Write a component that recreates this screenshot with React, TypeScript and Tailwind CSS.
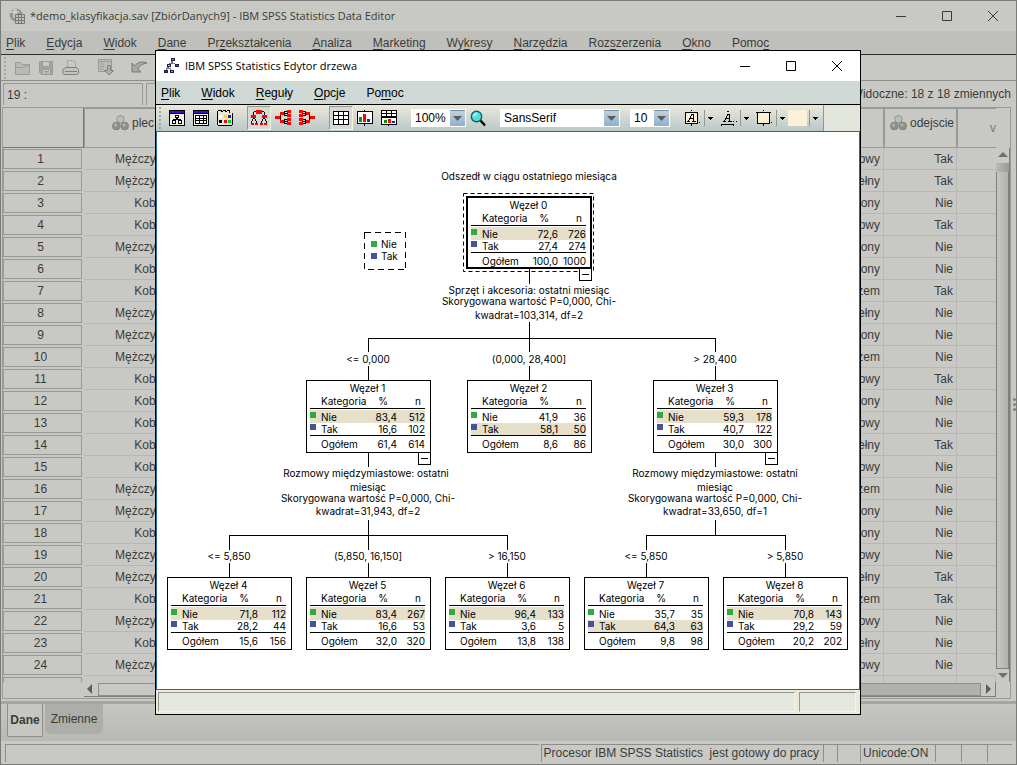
import type { ReactNode } from 'react';

const mainMenu: [string, number][] = [
  ['Plik', 0],
  ['Edycja', 0],
  ['Widok', 0],
  ['Dane', 0],
  ['Przekształcenia', 2],
  ['Analiza', 0],
  ['Marketing', 0],
  ['Wykresy', 2],
  ['Narzędzia', 0],
  ['Rozszerzenia', 3],
  ['Okno', 0],
  ['Pomoc', 4],
];

const treeMenu: [string, number][] = [
  ['Plik', 0],
  ['Widok', 0],
  ['Reguły', 0],
  ['Opcje', 0],
  ['Pomoc', 2],
];

const M = 'Mężczyzna';
const K = 'Kobieta';

const rows: [string, string, string][] = [
  [M, 'owy', 'Tak'],
  [M, 'ełny', 'Tak'],
  [K, 'ony', 'Nie'],
  [K, 'owy', 'Tak'],
  [M, 'ony', 'Nie'],
  [K, 'ony', 'Nie'],
  [K, 'zem', 'Tak'],
  [M, 'ełny', 'Nie'],
  [M, 'ony', 'Nie'],
  [M, 'zem', 'Nie'],
  [K, 'owy', 'Tak'],
  [K, 'ony', 'Nie'],
  [K, 'owy', 'Nie'],
  [K, 'ełny', 'Tak'],
  [K, 'owy', 'Nie'],
  [M, 'zem', 'Nie'],
  [M, 'ony', 'Nie'],
  [K, 'ony', 'Nie'],
  [M, 'owy', 'Nie'],
  [M, 'ełny', 'Tak'],
  [K, 'zem', 'Tak'],
  [M, 'owy', 'Nie'],
  [K, 'ełny', 'Nie'],
  [M, 'owy', 'Nie'],
];

type TreeNode = {
  id: number;
  x: number;
  y: number;
  nie: [string, string];
  tak: [string, string];
  total: [string, string];
  best: 'nie' | 'tak';
  open?: boolean;
};

const nodes: TreeNode[] = [
  { id: 0, x: 309, y: 64, nie: ['72,6', '726'], tak: ['27,4', '274'], total: ['100,0', '1000'], best: 'nie', open: true },
  { id: 1, x: 149, y: 248, nie: ['83,4', '512'], tak: ['16,6', '102'], total: ['61,4', '614'], best: 'nie', open: true },
  { id: 2, x: 310, y: 248, nie: ['41,9', '36'], tak: ['58,1', '50'], total: ['8,6', '86'], best: 'tak' },
  { id: 3, x: 496, y: 248, nie: ['59,3', '178'], tak: ['40,7', '122'], total: ['30,0', '300'], best: 'nie', open: true },
  { id: 4, x: 10, y: 445, nie: ['71,8', '112'], tak: ['28,2', '44'], total: ['15,6', '156'], best: 'nie' },
  { id: 5, x: 149, y: 445, nie: ['83,4', '267'], tak: ['16,6', '53'], total: ['32,0', '320'], best: 'nie' },
  { id: 6, x: 288, y: 445, nie: ['96,4', '133'], tak: ['3,6', '5'], total: ['13,8', '138'], best: 'nie' },
  { id: 7, x: 427, y: 445, nie: ['35,7', '35'], tak: ['64,3', '63'], total: ['9,8', '98'], best: 'tak' },
  { id: 8, x: 566, y: 445, nie: ['70,8', '143'], tak: ['29,2', '59'], total: ['20,2', '202'], best: 'nie' },
];

// centre of each text on the tree canvas
const captions = [
  { x: 372, y: 44, text: 'Odszedł w ciągu ostatniego miesiąca' },
  { x: 372, y: 158, text: 'Sprzęt i akcesoria: ostatni miesiąc' },
  { x: 372, y: 169, text: 'Skorygowana wartość P=0,000, Chi-' },
  { x: 372, y: 183, text: 'kwadrat=103,314, df=2' },
  { x: 211, y: 227, text: '<= 0,000' },
  { x: 372, y: 227, text: '(0,000, 28,400]' },
  { x: 558, y: 227, text: '> 28,400' },
  { x: 209, y: 341, text: 'Rozmowy międzymiastowe: ostatni' },
  { x: 211, y: 355, text: 'miesiąc' },
  { x: 211, y: 366, text: 'Skorygowana wartość P=0,000, Chi-' },
  { x: 211, y: 379, text: 'kwadrat=31,943, df=2' },
  { x: 558, y: 341, text: 'Rozmowy międzymiastowe: ostatni' },
  { x: 558, y: 355, text: 'miesiąc' },
  { x: 558, y: 366, text: 'Skorygowana wartość P=0,000, Chi-' },
  { x: 558, y: 379, text: 'kwadrat=33,650, df=1' },
  { x: 72, y: 424, text: '<= 5,850' },
  { x: 211, y: 424, text: '(5,850, 16,150]' },
  { x: 350, y: 424, text: '> 16,150' },
  { x: 489, y: 424, text: '<= 5,850' },
  { x: 628, y: 424, text: '> 5,850' },
];

function MenuBar({ items, className }: { items: [string, number][]; className: string }) {
  return (
    <nav className={`flex items-center gap-[21px] border-b px-[5px] text-[12px] ${className}`}>
      {items.map(([label, at]) => (
        <button key={label} type="button" className="whitespace-nowrap">
          {label.slice(0, at)}
          <span className="underline underline-offset-2">{label[at]}</span>
          {label.slice(at + 1)}
        </button>
      ))}
    </nav>
  );
}

function WindowButtons() {
  const shapes = [
    ['Minimalizuj', 'M0 5.5H10'],
    ['Maksymalizuj', 'M.5 .5H9.5V9.5H.5Z'],
    ['Zamknij', 'M0 0L10 10M10 0L0 10'],
  ];
  return (
    <div className="ml-auto flex h-full">
      {shapes.map(([label, d]) => (
        <button key={label} type="button" aria-label={label} className="flex w-[46px] items-center justify-center">
          <svg width="10" height="10" viewBox="0 0 10 10" fill="none" stroke="currentColor">
            <path d={d} />
          </svg>
        </button>
      ))}
    </div>
  );
}

function Icon({ children, w = 16 }: { children: ReactNode; w?: number }) {
  return (
    <svg width={w} height="16" viewBox={`0 0 ${w} 16`} shapeRendering="crispEdges" className="shrink-0">
      {children}
    </svg>
  );
}

function Tool({ label, on, children }: { label: string; on?: boolean; children: ReactNode }) {
  return (
    <button
      type="button"
      aria-label={label}
      className={`flex h-6 w-6 shrink-0 items-center justify-center border ${
        on ? 'border-t-[#9a968a] border-l-[#9a968a] border-r-[#faf3dc] border-b-[#faf3dc] bg-[#d5dad4]' : 'border-transparent'
      }`}
    >
      {children}
    </button>
  );
}

function Grip({ className }: { className: string }) {
  return (
    <div className={`flex flex-col gap-[2px] ${className}`}>
      {[0, 1, 2, 3, 4, 5].map((i) => (
        <span key={i} className="size-[2px] bg-current" />
      ))}
    </div>
  );
}

function Combo({ label, value, className }: { label: string; value: string; className: string }) {
  return (
    <div className={`flex h-[18px] shrink-0 items-center bg-white ${className}`}>
      <select
        aria-label={label}
        defaultValue={value}
        className="h-full w-full min-w-0 flex-1 appearance-none bg-transparent pl-1 text-[12px] outline-none"
      >
        <option>{value}</option>
      </select>
      <span className="mr-px flex h-4 w-[15px] shrink-0 items-center justify-center border-t border-[#6f93ad] bg-linear-to-b from-[#c3d0d8] to-[#8fb0cc]">
        <svg width="9" height="5" viewBox="0 0 9 5">
          <path d="M0 0H9L4.5 5Z" fill="#565c5e" />
        </svg>
      </span>
    </div>
  );
}

function DropArrow({ label }: { label: string }) {
  return (
    <button
      type="button"
      aria-label={label}
      className="flex h-4 w-3 shrink-0 items-center justify-center border-l border-[#9a968a]"
    >
      <svg width="5" height="3" viewBox="0 0 5 3" shapeRendering="crispEdges">
        <path d="M0 0H5V1H4V2H3V3H2V2H1V1H0Z" />
      </svg>
    </button>
  );
}

function Nominal() {
  return (
    <svg width="17" height="16" viewBox="0 0 17 16" className="shrink-0" stroke="#777873" strokeWidth="0.6">
      <circle cx="8.5" cy="4.3" r="3.7" fill="#bdbeb9" />
      <circle cx="4.3" cy="11" r="3.9" fill="#8f908b" />
      <circle cx="12.7" cy="11" r="3.9" fill="#8f908b" />
      <circle cx="3.6" cy="10" r="1.4" fill="#b4b5b0" stroke="none" />
      <circle cx="12" cy="10" r="1.4" fill="#b4b5b0" stroke="none" />
    </svg>
  );
}

function NodeBox({ node }: { node: TreeNode }) {
  const root = node.id === 0;
  const cell = 'p-0 text-right font-normal';
  return (
    <div className="absolute" style={{ left: node.x, top: node.y }}>
      {root && (
        <svg width="131" height="79" viewBox="0 0 131 79" className="absolute -top-[3px] -left-[3px]" fill="none" stroke="#000">
          <path d="M.5 .5H130.5V78.5H.5Z" strokeDasharray="4 3" />
        </svg>
      )}
      <div
        className={`h-[73px] bg-white ${root ? 'w-[126px] px-[5px] outline-2 -outline-offset-2 outline-black' : 'w-[125px] px-1 outline-1 -outline-offset-1 outline-black'}`}
      >
        <table className="w-[115px] table-fixed border-collapse leading-[12px]">
          <caption className={`text-center ${root ? 'h-4 pt-[3px]' : 'h-[15px] pt-[2px]'}`}>Węzeł {node.id}</caption>
          <colgroup>
            <col className="w-[11px]" />
            <col className="w-[46px]" />
            <col className="w-[30px]" />
            <col />
          </colgroup>
          <thead>
            <tr className="h-[13px] border-b border-black">
              <td className="p-0" />
              <th className="p-0 text-left font-normal">Kategoria</th>
              <th className="p-0 pr-[9px] text-right font-normal">%</th>
              <th className="p-0 pr-1 text-right font-normal">n</th>
            </tr>
            <tr className="h-[2px]" />
          </thead>
          <tbody>
            <tr className={`h-[13px] ${node.best === 'nie' ? 'bg-[#e6dfca]' : ''}`}>
              <td className="p-0">
                <span className="mb-1 block size-[6px] bg-[#2fab3b]" />
              </td>
              <th className="p-0 text-left font-normal">Nie</th>
              <td className={cell}>{node.nie[0]}</td>
              <td className={cell}>{node.nie[1]}</td>
            </tr>
            <tr className={`h-[12px] border-b border-black ${node.best === 'tak' ? 'bg-[#e6dfca]' : ''}`}>
              <td className="p-0">
                <span className="mb-1 block size-[6px] bg-[#46539c]" />
              </td>
              <th className="p-0 text-left font-normal">Tak</th>
              <td className={cell}>{node.tak[0]}</td>
              <td className={cell}>{node.tak[1]}</td>
            </tr>
            <tr className="h-4">
              <td className="p-0" />
              <th className="p-0 text-left font-normal">Ogółem</th>
              <td className={cell}>{node.total[0]}</td>
              <td className={cell}>{node.total[1]}</td>
            </tr>
          </tbody>
        </table>
      </div>
      {node.open && (
        <button
          type="button"
          aria-label={`Zwiń węzeł ${node.id}`}
          className="absolute top-[72px] right-0 flex size-[13px] items-center justify-center border border-black bg-white"
        >
          <span className="h-px w-[7px] bg-black" />
        </button>
      )}
    </div>
  );
}

function TreeCanvas() {
  return (
    <div className="relative min-h-0 flex-1 overflow-hidden border border-[#2b669f] bg-white font-['Inter',sans-serif] text-[10px] leading-[12px] text-black">
      <svg
        width="702"
        height="556"
        viewBox="0 0 702 556"
        className="absolute top-0 left-0"
        fill="none"
        stroke="#000"
        shapeRendering="crispEdges"
      >
        <path d="M372.5 137V152M372.5 190V220M211.5 220V206.5H558.5V220M211.5 234V248M372.5 234V248M558.5 234V248" />
        <path d="M211.5 321V335M211.5 388V418M72.5 418V403.5H350.5V418M72.5 431V445M211.5 431V445M350.5 431V445" />
        <path d="M558.5 321V335M558.5 388V403M489.5 418V403.5H628.5V418M489.5 431V445M628.5 431V445" />
        <path d="M207.5 100.5H248.5V137.5H207.5Z" strokeDasharray="6 4" />
      </svg>
      {captions.map((c) => (
        <span
          key={`${c.x}-${c.y}`}
          className="absolute -translate-x-1/2 -translate-y-1/2 whitespace-nowrap"
          style={{ left: c.x, top: c.y }}
        >
          {c.text}
        </span>
      ))}
      <ul className="absolute top-[106px] left-[214px]">
        <li className="flex items-center gap-1">
          <span className="size-[6px] bg-[#2fab3b]" />
          Nie
        </li>
        <li className="flex items-center gap-1">
          <span className="size-[6px] bg-[#46539c]" />
          Tak
        </li>
      </ul>
      {nodes.map((n) => (
        <NodeBox key={n.id} node={n} />
      ))}
    </div>
  );
}

function TreeToolbar() {
  return (
    <div className="flex h-[26px] bg-[#e3e6dc]">
      <div className="flex items-center border-r border-[#9a968a] bg-linear-to-b from-[#ebe9da] to-[#b9c8c9] pr-[2px] pl-[3px]">
        <Grip className="mr-1 text-[#a5a79d]" />
        <Tool label="Mapa drzewa">
          <Icon>
            <path d="M0 0H16V16H0Z" />
            <path d="M1 4H15V15H1Z" fill="#f3f1e4" />
            <path d="M1 1H15V3H1Z" fill="#3a10d8" />
            <path d="M6 5H10V8H6ZM7 8H9V9H7ZM4 9H12V10H4ZM3 10H7V14H3ZM9 10H13V14H9Z" />
            <path d="M7 6H9V7H7ZM4 11H6V13H4ZM10 11H12V13H10Z" fill="#fff" />
          </Icon>
        </Tool>
        <Tool label="Tabela">
          <Icon>
            <path d="M0 0H16V16H0Z" />
            <path d="M1 4H15V15H1Z" fill="#f3f1e4" />
            <path d="M1 1H15V3H1Z" fill="#3a10d8" />
            <path d="M2 5H14V14H2Z" />
            <path d="M3 6H6V8H3ZM7 6H10V8H7ZM11 6H13V8H11ZM3 9H6V10H3ZM7 9H10V10H7ZM11 9H13V10H11ZM3 11H6V13H3ZM7 11H10V13H7ZM11 11H13V13H11Z" fill="#fff" />
          </Icon>
        </Tool>
        <Tool label="Kolory">
          <Icon>
            <path d="M1 0H5V1H6V0H9V1H10V0H13V3H16V15H15V16H1V15H0V1H1Z" />
            <path d="M1 1H4V2H6V1H8V2H10V1H12V3H15V15H1Z" fill="#e9e8da" />
            <path d="M2 5H5V8H2Z" fill="#fff" />
            <path d="M7 5H10V8H7Z" fill="#fd0" />
            <path d="M11 5H14V8H11Z" fill="#3a10d8" />
            <path d="M2 10H5V13H2Z" />
            <path d="M7 10H10V13H7Z" fill="#f00" />
            <path d="M11 10H14V13H11Z" fill="#0c2" />
          </Icon>
        </Tool>
        <span className="w-[10px]" />
        <Tool label="Orientacja z góry na dół" on>
          <Icon>
            <path d="M3 1H13V2H14V6H13V2H3V6H2V2H3ZM2 8H4V9H5V11H6V14H5V11H1V14H0V11H1V9H2ZM12 8H14V9H15V11H16V14H15V11H11V14H10V11H11V9H12Z" />
            <path d="M2 9H4V11H2ZM12 9H14V11H12Z" fill="#d5dad4" />
            <path d="M5 0H11V4H5ZM0 5H5V8H0ZM11 5H16V8H11ZM0 13H3V15H0ZM4 13H7V15H4ZM9 13H12V15H9ZM13 13H16V15H13Z" fill="#f00" />
          </Icon>
        </Tool>
        <Tool label="Orientacja od lewej do prawej">
          <Icon>
            <path d="M5 3H6V12H5ZM5 3H13V4H5ZM5 11H13V12H5ZM9 1H10V6H9ZM9 9H10V14H9ZM9 1H13V2H9ZM9 5H13V6H9ZM9 9H13V10H9ZM9 13H13V14H9Z" />
            <path d="M0 6H5V9H0ZM5 2H9V5H5ZM5 10H9V13H5ZM12 0H16V3H12ZM12 4H16V7H12ZM12 8H16V11H12ZM12 12H16V15H12Z" fill="#f00" />
          </Icon>
        </Tool>
        <Tool label="Orientacja od prawej do lewej">
          <Icon>
            <path d="M10 3H11V12H10ZM3 3H11V4H3ZM3 11H11V12H3ZM6 1H7V6H6ZM6 9H7V14H6ZM3 1H7V2H3ZM3 5H7V6H3ZM3 9H7V10H3ZM3 13H7V14H3Z" />
            <path d="M11 6H16V9H11ZM7 2H11V5H7ZM7 10H11V13H7ZM0 0H4V3H0ZM0 4H4V7H0ZM0 8H4V11H0ZM0 12H4V15H0Z" fill="#f00" />
          </Icon>
        </Tool>
        <span className="w-[10px]" />
        <Tool label="Tabela w węzłach" on>
          <Icon>
            <path d="M0 1H16V15H0Z" />
            <path d="M1 2H5V5H1ZM6 2H10V5H6ZM11 2H15V5H11ZM1 6H5V9H1ZM6 6H10V9H6ZM11 6H15V9H11ZM1 10H5V14H1ZM6 10H10V14H6ZM11 10H15V14H11Z" fill="#fff" />
          </Icon>
        </Tool>
        <Tool label="Wykres w węzłach">
          <Icon>
            <path d="M0 1H16V14H0ZM7 0H8V1H7ZM7 14H8V16H7Z" />
            <path d="M1 2H15V13H1Z" fill="#fff" />
            <path d="M2 7H5V12H2Z" fill="#090" />
            <path d="M6 4H9V12H6Z" fill="#f00" />
            <path d="M10 9H13V12H10Z" fill="#3a10d8" />
          </Icon>
        </Tool>
        <Tool label="Tabela i wykres w węzłach">
          <Icon>
            <path d="M0 0H16V15H0ZM7 15H8V16H7Z" />
            <path d="M1 1H5V3H1ZM6 1H10V3H6ZM11 1H15V3H11ZM1 4H5V6H1ZM6 4H10V6H6ZM11 4H15V6H11ZM1 8H15V14H1Z" fill="#fff" />
            <path d="M3 10H6V13H3Z" fill="#090" />
            <path d="M7 9H10V13H7Z" fill="#f00" />
            <path d="M11 11H14V13H11Z" fill="#3a10d8" />
          </Icon>
        </Tool>
        <Combo label="Powiększenie" value="100%" className="ml-[10px] w-[55px]" />
        <Tool label="Szukaj">
          <svg width="17" height="17" viewBox="0 0 17 17">
            <path d="M10 10L15 15.5" stroke="#000" strokeWidth="2.4" />
            <circle cx="6.5" cy="6.5" r="5.2" fill="#52dfe0" stroke="#17615f" strokeWidth="1.4" />
            <path d="M4 6.5A3 3 0 0 1 7 3.6" stroke="#d4ffff" fill="none" strokeWidth="1.4" />
          </svg>
        </Tool>
        <Combo label="Czcionka" value="SansSerif" className="ml-[10px] w-[120px]" />
        <Combo label="Rozmiar czcionki" value="10" className="mx-[10px] w-[40px]" />
        <Tool label="Kolor tekstu">
          <Icon w={17}>
            <path d="M7 0H8V1H7ZM7 14H8V16H7ZM15 12H16V13H15Z" />
            <rect x="1.5" y="2.5" width="12" height="11" fill="#fdf0d2" stroke="#000" />
            <path d="M3 11H6V12H3ZM8 11H12V12H8ZM4 10H5V11H4ZM5 8H6V10H5ZM6 8H9V9H6ZM6 6H7V8H6ZM7 4H10V5H7ZM7 5H8V6H7ZM9 5H10V11H9Z" />
          </Icon>
        </Tool>
        <DropArrow label="Kolor tekstu, lista" />
        <Tool label="Kolor linii">
          <Icon w={17}>
            <path d="M7 1H9V2H7ZM1 14H14V15H1ZM1 15H2V16H1ZM13 15H14V16H13ZM13 11H14V12H13ZM16 11H17V12H16Z" />
            <path d="M3 11H6V12H3ZM8 11H12V12H8ZM4 10H5V11H4ZM5 8H6V10H5ZM6 8H9V9H6ZM6 6H7V8H6ZM7 4H10V5H7ZM7 5H8V6H7ZM9 5H10V11H9Z" />
          </Icon>
        </Tool>
        <DropArrow label="Kolor linii, lista" />
        <Tool label="Kolor ramki">
          <Icon w={17}>
            <path d="M7 0H8V1H7ZM7 14H8V16H7ZM15 12H16V13H15Z" />
            <rect x="1.5" y="2.5" width="12" height="11" fill="#fdf0d2" stroke="#000" />
            <path d="M0 2H1V3H0ZM14 2H15V3H14Z" />
          </Icon>
        </Tool>
        <DropArrow label="Kolor ramki, lista" />
        <button type="button" aria-label="Kolor tła" className="mr-[2px] h-4 w-[19px] shrink-0 bg-[#fdf0d8]" />
        <DropArrow label="Kolor tła, lista" />
      </div>
    </div>
  );
}

function TreeWindow() {
  return (
    <section className="absolute top-[49px] left-[154px] flex h-[665px] w-[706px] flex-col border border-black bg-[#ebe9da] text-black">
      <header className="flex h-[30px] items-center bg-white pl-2">
        <Icon>
          <path d="M7 3H9V5H7ZM5 5H11V6H5ZM3 9H5V10H3ZM2 10H7V11H2ZM2 11H3V12H2ZM6 11H7V12H6Z" fill="#777" />
          <path d="M7 0H11V3H7ZM3 6H7V9H3ZM11 6H15V9H11ZM0 12H4V15H0ZM6 12H10V15H6Z" fill="#124" />
          <path d="M8 1H10V2H8Z" fill="#0d3" />
          <path d="M4 7H6V8H4Z" fill="#ee0" />
          <path d="M12 7H14V8H12Z" fill="#e0e" />
          <path d="M1 13H3V14H1Z" fill="#f00" />
          <path d="M7 13H9V14H7Z" fill="#0df" />
        </Icon>
        <h2 className="ml-[5px] font-['Open_Sans',sans-serif] text-[11px]">IBM SPSS Statistics Edytor drzewa</h2>
        <WindowButtons />
      </header>
      <MenuBar items={treeMenu} className="h-6 border-black bg-[#ced8d5]" />
      <TreeToolbar />
      <TreeCanvas />
      <footer className="flex h-6 gap-1 p-[2px] pr-1">
        <div className="flex-1 border border-t-[#9a968a] border-r-[#faf3dc] border-b-[#faf3dc] border-l-[#9a968a] bg-[#e4e7dd]" />
        <div className="w-[57px] border border-t-[#9a968a] border-r-[#faf3dc] border-b-[#faf3dc] border-l-[#9a968a] bg-[#e4e7dd]" />
      </footer>
    </section>
  );
}

function MainToolbar() {
  return (
    <div className="flex h-[26px] items-center gap-2 border-b border-[#8d8e89] pl-[3px] text-[#9a9b96]">
      <Grip className="text-[#a5a6a1]" />
      <button type="button" aria-label="Otwórz">
        <svg width="17" height="16" viewBox="0 0 17 16" fill="#b8b9b4" stroke="currentColor">
          <path d="M1.5 14.5V2.5H6.5L8.5 4.5H15.5V14.5Z" />
          <path d="M1.5 14.5V7.5H9.5L11 6H15.5V14.5Z" />
        </svg>
      </button>
      <button type="button" aria-label="Zapisz">
        <svg width="15" height="16" viewBox="0 0 15 16" fill="none" stroke="currentColor">
          <path d="M.5 1.5H13.5V14.5H2.5L.5 12.5Z" fill="#a3a49f" />
          <path d="M3.5 1.5H10.5V6.5H3.5ZM3.5 9.5H11.5V14.5H3.5Z" fill="#c8c9c4" />
          <path d="M5 11.5H10M5 13H10" />
        </svg>
      </button>
      <button type="button" aria-label="Drukuj">
        <svg width="18" height="16" viewBox="0 0 18 16" fill="none" stroke="#7f807b">
          <path d="M5.5 8V.5H11.5L13.5 2.5V8" fill="#c8c9c4" stroke="#a5a6a1" />
          <path d="M3.5 7.5H14.5L16.5 9.5V13.5L15.5 14.5H2.5L1 13.5V9.5Z" fill="#c2c3be" />
          <path d="M3 11.5H15" />
        </svg>
      </button>
      <button type="button" aria-label="Ostatnio używane" className="ml-[10px]">
        <svg width="17" height="17" viewBox="0 0 17 17" fill="none" stroke="currentColor">
          <path d="M.5 .5H13.5V12.5H.5Z" fill="#bcbdb8" />
          <path d="M.5 2.5H13.5M2 5H6M2 7.5H6M2 10H6" />
          <path d="M9.5 6.5H12.500V11.5H15.5L11 16L6.5 11.5H9.5Z" fill="#b0b1ac" stroke="#7f807b" />
        </svg>
      </button>
      <button type="button" aria-label="Cofnij" className="ml-2">
        <svg width="17" height="15" viewBox="0 0 17 15">
          <path d="M1 3V12H10L7 9C8 6 11 4 16 3C11 1 6 2 4 6Z" fill="#a7a8a3" stroke="#7a7b76" />
        </svg>
      </button>
    </div>
  );
}

function DataGrid() {
  const line = 'border-r border-b border-[#b7b8b3]';
  const head = 'border border-[#999a95] p-0 align-top font-normal';
  return (
    <main className="mx-px flex min-h-0 flex-1 flex-col">
      <div className="mr-1 flex min-h-0 flex-1 flex-col border border-[#999a95]">
        <div className="flex min-h-0 flex-1">
          <div className="min-w-0 flex-1 overflow-hidden">
            <table className="w-full table-fixed border-separate border-spacing-0">
              <colgroup>
                <col className="w-[81px]" />
                <col className="w-[96px]" />
                <col />
                <col className="w-[90px]" />
                <col className="w-[73px]" />
                <col className="w-[39px]" />
              </colgroup>
              <thead>
                <tr className="h-10">
                  <td className="border-r border-b border-[#777873] p-0" />
                  <th className={head}>
                    <span className="flex items-center gap-[3px] pt-[5px] pl-[27px]">
                      <Nominal />
                      plec
                    </span>
                  </th>
                  <th className={head} />
                  <th className={head} />
                  <th className={head}>
                    <span className="flex items-center justify-end gap-[3px] pt-[5px] pr-[2px]">
                      <Nominal />
                      odejscie
                    </span>
                  </th>
                  <th className="border-t border-b border-l border-[#999a95] p-0 text-right font-normal text-[#777873]">v</th>
                </tr>
              </thead>
              <tbody>
                {rows.map((row, i) => (
                  <tr key={i} className="h-[22px]">
                    <th className="p-0 pr-[2px] font-normal">
                      <span className="block h-5 border border-[#999a95] pr-1 leading-[18px]">{i + 1}</span>
                    </th>
                    <td className={`p-0 pr-1 text-right ${line}`}>{row[0]}</td>
                    <td className={`p-0 ${line}`} />
                    <td className={`p-0 pr-[3px] text-right ${line}`}>{row[1]}</td>
                    <td className={`p-0 pr-[3px] text-right ${line}`}>{row[2]}</td>
                    <td className="border-b border-[#b7b8b3] p-0" />
                  </tr>
                ))}
                <tr className="h-[22px]">
                  <th className="p-0 pr-[2px]">
                    <span className="block h-5 border border-[#999a95]" />
                  </th>
                  <td className={line} />
                  <td className={line} />
                  <td className={line} />
                  <td className={line} />
                  <td className={line} />
                </tr>
              </tbody>
            </table>
          </div>
          <div className="mt-10 flex w-[14px] flex-col items-center border-r border-[#7f807b]">
            <svg width="10" height="15" viewBox="0 0 10 15" className="shrink-0">
              <path d="M0 9L5 4L10 9Z" fill="#6f706b" />
            </svg>
            <div className="h-[9px] w-full bg-linear-to-r from-[#b9bab5] to-[#999a95]" />
            <div className="w-full flex-1 border-x border-b border-[#7f807b] bg-linear-to-r from-[#c6c7c2] to-[#b1b2ad]" />
            <svg width="10" height="13" viewBox="0 0 10 13" className="shrink-0">
              <path d="M0 4L5 9L10 4Z" fill="#6f706b" />
            </svg>
          </div>
        </div>
        <div className="mr-[14px] mb-px ml-[81px] flex h-[15px] items-center border-r border-b border-[#7f807b]">
          <svg width="14" height="10" viewBox="0 0 14 10" className="shrink-0">
            <path d="M8 0L3 5L8 10Z" fill="#5f605b" />
          </svg>
          <div className="h-[13px] flex-1 border border-[#8d8e89] bg-linear-to-r from-[#c8c9c4] from-5% to-[#b1b2ad] to-30%" />
          <svg width="14" height="10" viewBox="0 0 14 10" className="shrink-0">
            <path d="M5 0L10 5L5 10Z" fill="#5f605b" />
          </svg>
        </div>
      </div>
    </main>
  );
}

export default function App() {
  const slot = 'shrink-0 border-t border-l border-[#8d8e89]';
  return (
    <div className="relative flex h-screen flex-col overflow-hidden border border-[#7a7b76] bg-[#c8c9c4] font-['Liberation_Sans',Arial,sans-serif] text-[12px] text-[#3b3c38]">
      <header className="flex h-[30px] shrink-0 items-center pl-2">
        <svg width="17" height="17" viewBox="0 0 17 17" className="shrink-0" fill="none" stroke="#777873">
          <circle cx="7" cy="7" r="6.5" fill="#93948f" stroke="none" />
          <path d="M5 1V10M1 4H10M7 1V8" stroke="#d3d4cf" strokeWidth="1.5" />
          <path d="M6.5 6.5H15.5V15.5H6.5ZM6.5 9.5H15.5M6.5 12.5H15.5M9.5 6.5V15.5M12.5 6.5V15.5" fill="#c1c2bd" />
        </svg>
        <h1 className="ml-1 font-['Open_Sans',sans-serif] text-[11px]">*demo_klasyfikacja.sav [ZbiórDanych9] - IBM SPSS Statistics Data Editor</h1>
        <WindowButtons />
      </header>
      <MenuBar items={mainMenu} className="h-6 shrink-0 border-[#2f302c] bg-[#bfc0bb]" />
      <MainToolbar />
      <div className="flex h-[26px] shrink-0 items-center gap-[3px] px-[2px]">
        <input
          aria-label="Komórka"
          defaultValue="19 :"
          className="h-[22px] w-[140px] border-t border-r border-l border-[#999a95] bg-transparent px-[3px] outline-none"
        />
        <input
          aria-label="Wartość"
          className="h-[22px] min-w-0 flex-1 border-t border-l border-[#999a95] bg-transparent px-1 outline-none"
        />
        <span className="pr-[3px] whitespace-nowrap">Widoczne: 18 z 18 zmiennych</span>
      </div>
      <DataGrid />
      <div className="mt-[2px] flex h-10 shrink-0 items-start gap-[2px] border-t-[3px] border-[#a5a6a1] bg-linear-to-b from-[#c6c7c2] to-[#b8b9b4] pl-[6px]">
        <button type="button" className="h-[33px] w-9 rounded-b-xs border-x border-b border-[#8d8e89] bg-[#c6c7c2] text-center font-bold">
          Dane
        </button>
        <button type="button" className="h-[30px] w-[58px] rounded-b-md bg-[#adaea9] text-center">
          Zmienne
        </button>
      </div>
      <footer className="flex h-[23px] shrink-0 px-1 pt-[3px] pb-[2px] leading-[17px]">
        <div className={`${slot} mr-[2px] min-w-0 flex-1 shrink`} />
        <div className={`${slot} px-[2px] pr-1 whitespace-pre`}>Procesor IBM SPSS Statistics  jest gotowy do pracy</div>
        <div className={`${slot} w-[14px]`} />
        <div className={`${slot} w-[23px]`} />
        <div className={`${slot} w-[75px] px-[2px]`}>Unicode:ON</div>
        <div className={`${slot} w-[26px]`} />
        <div className={`${slot} w-[26px]`} />
        <div className={`${slot} w-[25px]`} />
      </footer>
      <div className="absolute top-[397px] right-0 flex flex-col gap-[2px]">
        <span className="size-[3px] rounded-full bg-[#7f807b]" />
        <span className="size-[3px] rounded-full bg-[#7f807b]" />
        <span className="size-[3px] rounded-full bg-[#7f807b]" />
      </div>
      <TreeWindow />
    </div>
  );
}
